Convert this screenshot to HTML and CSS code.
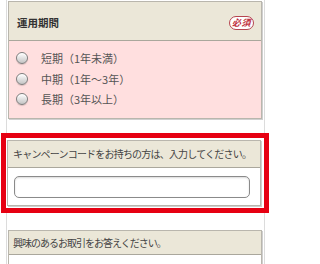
FILE: index.html
```html
<!DOCTYPE html>
<html lang="ja">
<head>
<meta charset="utf-8">
<link rel="stylesheet" href="styles.css">
</head>
<body>
<div class="wrap">
  <section class="box">
    <div class="box-head head-main">
      <span class="title">運用期間</span>
      <span class="badge">必須</span>
    </div>
    <ul class="radios">
      <li><span class="radio"></span>短期（1年未満）</li>
      <li><span class="radio"></span>中期（1年～3年）</li>
      <li><span class="radio"></span>長期（3年以上）</li>
    </ul>
  </section>

  <div class="highlight">
    <section class="box">
      <div class="box-head head-code">キャンペーンコードをお持ちの方は、入力してください。</div>
      <div class="code-body">
        <input class="code-input" type="text">
      </div>
    </section>
  </div>

  <section class="box last">
    <div class="box-head head-interest">興味のあるお取引をお答えください。</div>
    <div class="interest-body"></div>
  </section>
</div>
</body>
</html>
```

FILE: styles.css
```css
html, body {
  margin: 0;
  padding: 0;
  background: #fff;
  overflow: hidden;
}
body {
  font-family: "Noto Sans CJK JP", "Noto Sans", sans-serif;
  color: #333;
}
.wrap {
  margin-left: 6px;
  width: 259px;
  box-sizing: border-box;
  height: 264px;
  border-left: 1px solid #dcdcdc;
  border-right: 1px solid #dcdcdc;
  padding: 1px 2px 0 1px;
}
.box {
  border: 1px solid #b9b6ad;
  box-shadow: 1px 1px 0 #cfcfcf;
  background: #fff;
}
.box-head {
  background: #ebe7d8;
  border-bottom: 1px solid #aaa79c;
  display: flex;
  align-items: center;
}
.head-main {
  height: 38px;
  padding: 0 7px 0 8px;
  justify-content: space-between;
}
.title {
  font-size: 10.5px;
  font-weight: bold;
  color: #333;
  padding-top: 3px;
}
.badge {
  width: 23px;
  height: 12px;
  border: 1.5px solid #b5454f;
  border-radius: 8px;
  background: #fff;
  color: #c0303c;
  font-size: 9px;
  font-weight: bold;
  font-style: italic;
  display: flex;
  align-items: center;
  justify-content: center;
  letter-spacing: 0.5px;
  margin-top: 3px;
}
.radios {
  list-style: none;
  margin: 0;
  padding: 7px 0 8px 7px;
  background: #ffdfdf;
}
.radios li {
  height: 20.5px;
  display: flex;
  align-items: center;
  font-size: 11px;
  color: #555;
}
.radio {
  width: 10px;
  height: 10px;
  border-radius: 50%;
  border: 1px solid #7d7d7d;
  background: linear-gradient(#ffffff, #c4c4c4);
  box-shadow: inset 0 1px 1px #fff, 0 1px 1px rgba(0,0,0,0.15);
  margin-right: 13px;
  flex: none;
}
.highlight {
  margin: 14px -7px 0;
  border: 5px solid #e60012;
  background: #fff;
  padding: 2px 3px 2px 1px;
}
.head-code {
  height: 26px;
  padding-left: 5px;
  font-size: 10px;
  letter-spacing: -0.8px;
  color: #444;
}
.code-body {
  height: 37px;
  display: flex;
  align-items: center;
  padding-left: 6px;
}
.code-input {
  width: 236px;
  height: 22px;
  box-sizing: border-box;
  border: 1px solid #8a8a8a;
  border-radius: 5px;
  box-shadow: inset 0 1px 2px rgba(0,0,0,0.15);
  background: #fff;
  margin: 1px 0 0;
  padding: 0;
}
.last {
  margin-top: 17px;
}
.head-interest {
  height: 23px;
  padding-left: 4px;
  font-size: 10px;
  letter-spacing: -1px;
  color: #444;
}
.interest-body {
  height: 20px;
}
```
